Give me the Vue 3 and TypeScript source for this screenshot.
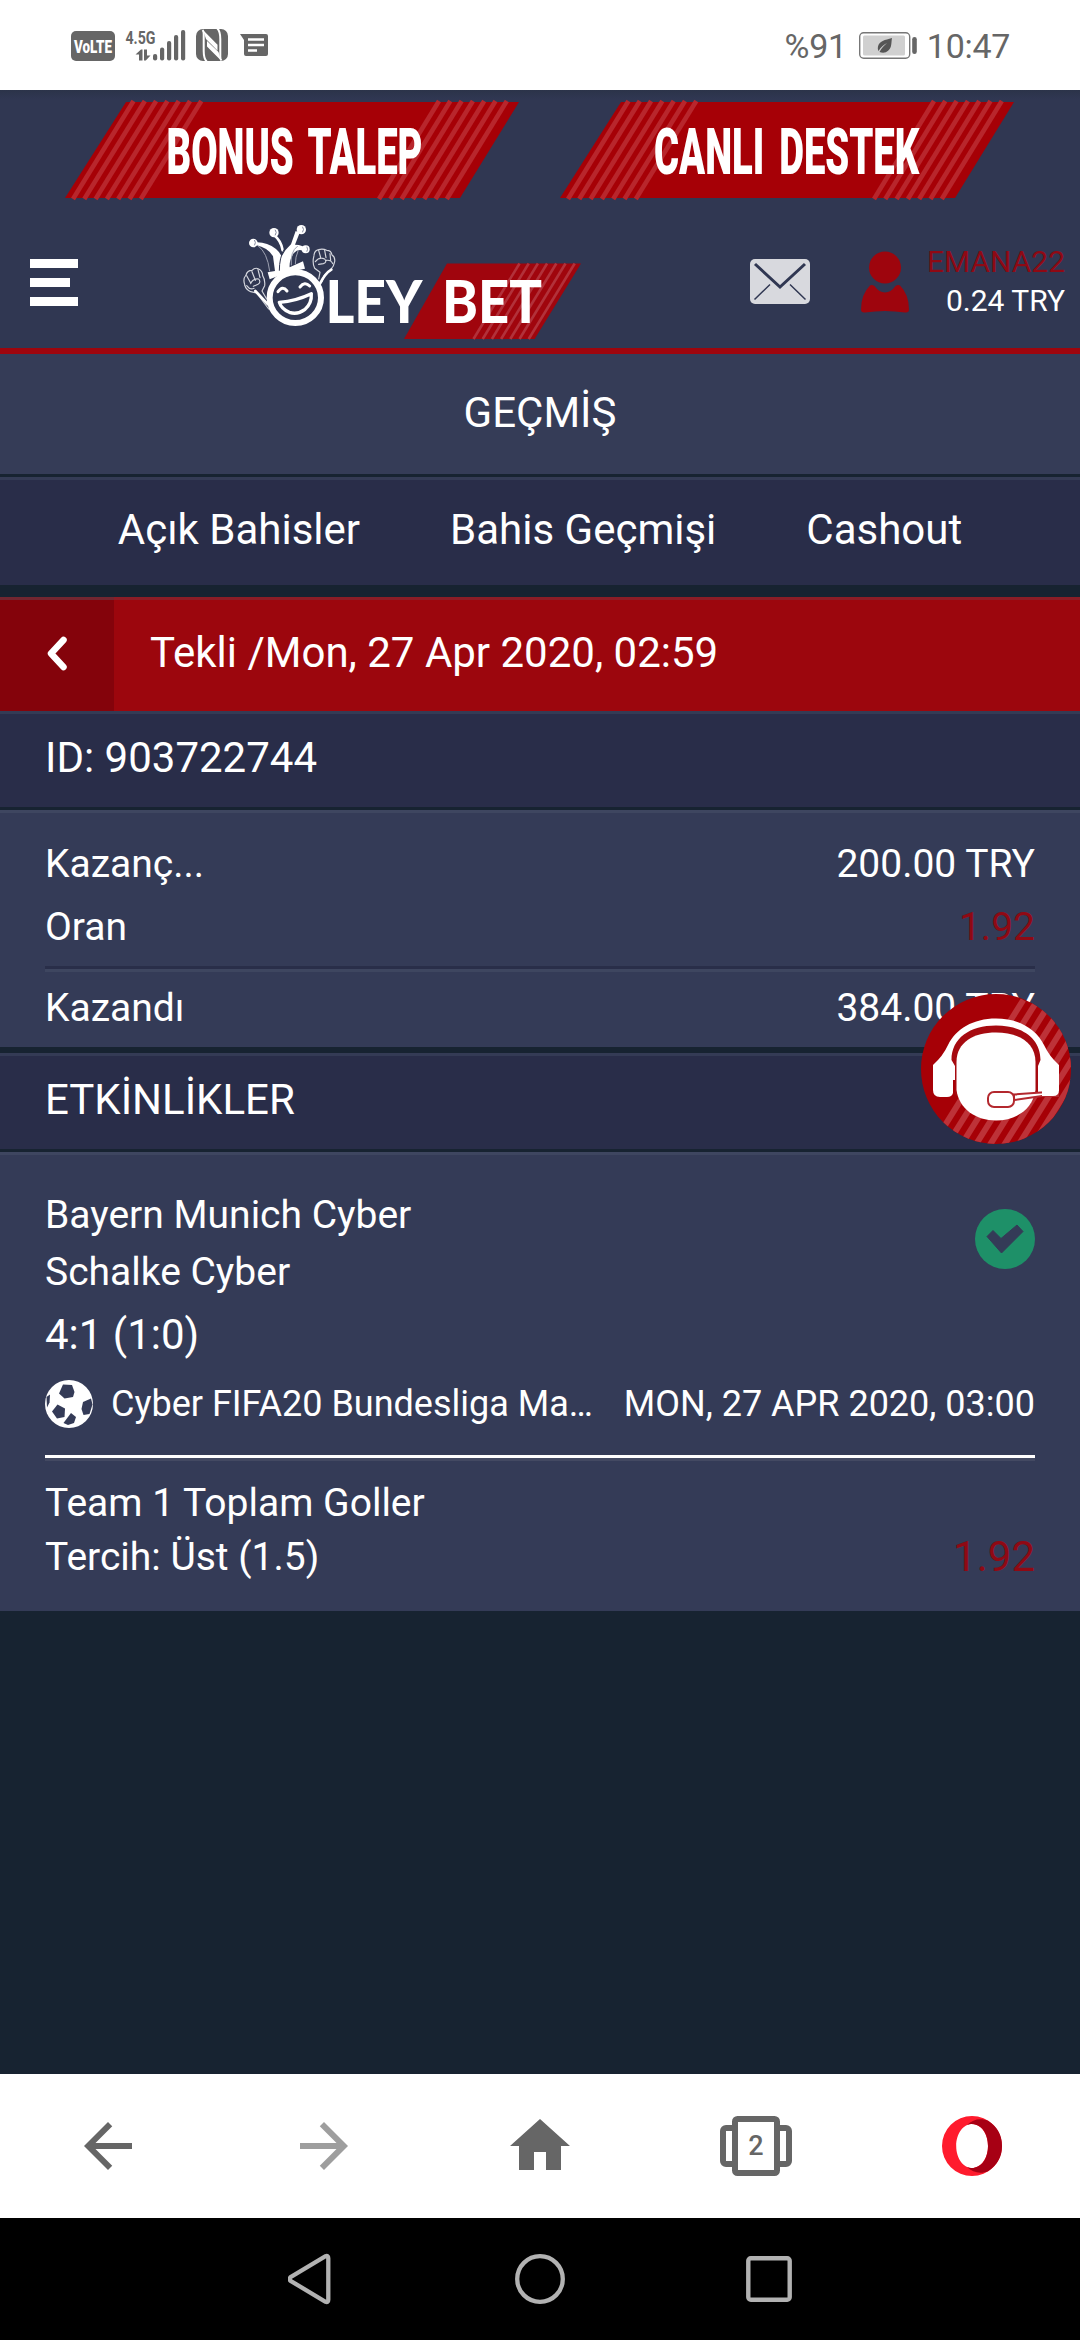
<script setup lang="ts">
interface Banner {
  label: string
  textX: number
  scale: number
}

interface SummaryRow {
  label: string
  value: string
  accent?: boolean
}

const banners: Banner[] = [
  { label: 'BONUS TALEP', textX: 101.5, scale: 0.593 },
  { label: 'CANLI DESTEK', textX: 94, scale: 0.593 },
]

const stripes = [0, 1, 2, 3, 4, 5, 6]
const tabs = ['Açık Bahisler', 'Bahis Geçmişi', 'Cashout']

const summary: SummaryRow[] = [
  { label: 'Kazanç...', value: '200.00 TRY' },
  { label: 'Oran', value: '1.92', accent: true },
]
</script>

<template>
  <div class="screen">
    <div class="status">
      <svg class="status-left" width="210" height="40" viewBox="66 25 210 40">
        <rect x="71" y="31" width="44" height="30" rx="5" fill="#666" />
        <text x="74" y="52.500" class="volte" textLength="38" lengthAdjust="spacingAndGlyphs">VoLTE</text>
        <text x="125.500" y="43.700" class="net" textLength="30" lengthAdjust="spacingAndGlyphs">4.5G</text>
        <g fill="#666">
          <path d="M135.500 54.500L141 49.500h1.500v11h-3.500v-6z" />
          <path d="M150.500 55.500L145.800 60.500h-1.800v-11h3v6z" />
          <rect x="153" y="54" width="4.200" height="6.500" rx="2" />
          <rect x="160" y="47.500" width="4.200" height="13" rx="2" />
          <rect x="167" y="41" width="4.200" height="19.500" rx="2" />
          <rect x="174" y="35" width="4.200" height="25.500" rx="2" />
          <rect x="181" y="30" width="4.200" height="30.500" rx="2" />
          <rect x="196" y="29" width="32" height="32" rx="7" />
          <path d="M240 34h26a2 2 0 0 1 2 2v18a2 2 0 0 1-2 2h-20a2 2 0 0 1-2-2V40z" />
        </g>
        <path d="M202.500 30c1.500 1.500 1.200 3 1.200 5v16c0 4 .3 8 3 10.500M221.500 60.500c-1.500-1.500-1.200-3-1.200-5V39c0-4-.3-8-3-10.500" fill="none" stroke="#fff" stroke-width="2" />
        <path d="M203 30l14.500 14.800v5.700L206 39zM221 60.500L207 46.500V41L218.500 52z" fill="#fff" />
        <path d="M248 39.500h16M248 45h16M248 50.500h9" stroke="#fff" stroke-width="2.600" />
      </svg>
      <div class="status-right">
        <span>%91</span>
        <svg width="60" height="30" viewBox="857 31 60 30">
          <rect x="858.700" y="32.700" width="50" height="25.600" rx="4" fill="#fff" stroke="#777" stroke-width="1.400" />
          <rect x="862" y="35.500" width="42" height="20" rx="1.500" fill="#d0d0d0" />
          <rect x="911.200" y="37" width="4.600" height="17" rx="2.300" fill="#666" />
          <path d="M891 38c-7 2-13 3-14 8.500-.5 2 0 3.500.5 4.500 2.500-4 5-6 8.500-8-3 2.500-5.500 5-7.500 9 6 2 10-1 11.500-6 .7-3 .5-6 1-8z" fill="#555" />
        </svg>
        <span>10:47</span>
      </div>
    </div>

    <header class="header">
      <div class="banners">
        <svg v-for="b in banners" :key="b.label" width="455" height="96" viewBox="0 0 455 96">
          <path d="M61 0H454L395 96H0z" fill="#a60006" />
          <g stroke="#b8262c" stroke-width="4.600">
            <line v-for="s in stripes" :key="'l' + s" :x1="68.500 + s * 11.300" y1="-1" :x2="8 + s * 11.300" y2="97" />
            <line v-for="s in stripes" :key="'r' + s" :x1="374 + s * 11.300" y1="-1" :x2="314 + s * 11.300" y2="97" />
          </g>
          <text class="banner-text" :transform="`translate(${b.textX} 72) scale(${b.scale} 1)`">{{ b.label }}</text>
        </svg>
      </div>

      <div class="brand-row">
        <svg class="burger" width="48" height="47" viewBox="0 0 48 47" fill="#fff">
          <rect width="48" height="9" />
          <rect y="19" width="40" height="9" />
          <rect y="38" width="48" height="9" />
        </svg>

        <svg class="logo" width="345" height="120" viewBox="240 222 345 120">
          <path d="M447 263.500H581L534.600 339H404z" fill="#a0050d" />
          <g stroke="#b2313a" stroke-width="2.600">
            <line v-for="s in stripes" :key="s" :x1="519.500 + s * 9.200" y1="263.500" :x2="473.500 + s * 9.200" y2="339" />
          </g>
          <text x="325.500" y="322.500" class="logo-text" textLength="97" lengthAdjust="spacingAndGlyphs">LEY</text>
          <text x="442" y="322.500" class="logo-text" textLength="100" lengthAdjust="spacingAndGlyphs">BET</text>
          <g transform="translate(230 215) scale(.33333)" fill="none" stroke="#fff" stroke-linecap="round" stroke-linejoin="round">
            <ellipse cx="196" cy="248" rx="77" ry="76" stroke-width="18" />
            <path d="M113 172l22-4-6-44q-14-26-52-34l-1-8q34-2 62 20 10 8 17 22 10-20 28-36l14-40 12 5-14 36q24 0 36 14l-6 8q-18-14-34 4-14 22-12 42l40-18 6 22q-50 8-106 32z" fill="#fff" stroke="none" />
            <path d="M84 92q28 20 35 76M138 64q16 18 18 36M184 150q-4-40 18-56M196 146q0-20 8-38" stroke="#9da1b1" stroke-width="3" />
            <path d="M132 60q22 18 26 46" stroke-width="8" />
            <path d="M148 166q0-38 14-62" stroke="#30364f" stroke-width="3" />
            <g fill="#fff" stroke="none">
              <circle cx="70" cy="84" r="13" />
              <circle cx="132" cy="53" r="14" />
              <circle cx="214" cy="44" r="14" />
              <circle cx="227" cy="103" r="12" />
            </g>
            <g stroke="#858a9e" stroke-width="3">
              <path d="M74 76q5 7 0 14M136 45q6 7 0 15M218 36q6 7 0 15M231 96q4 7 0 13" />
            </g>
            <path d="M148 262q50-4 96-26 2 30-20 48-22 16-46 8-24-10-30-30z" stroke-width="10" />
            <path d="M144 230q14-20 27-2M210 216q14-18 29-3" stroke-width="9" />
            <g stroke-width="3.500" stroke="#d5d7de">
              <path d="M252 122q-6 22 2 38l16 12-4 20M252 120q2-14 14-16 12-4 24 2 14 0 16 14 10 6 8 20-2 14-12 24l-20 18-6 18" />
              <path d="M266 106l6 22M284 106l4 22M300 116l2 20M256 140q12-16 28-8 8 10-4 14l-14 2M288 136q16-2 20 10" />
              <path d="M44 208q-6-16 4-28 4-14 18-14 10-10 20-4 12 6 12 20 8 12 6 30l-8 16 14 24M44 210q4 14 18 20l18 4 36 48" />
              <path d="M50 182l12 22M66 170l10 26M84 164l6 24M62 206q6-16 24-14 8 10-2 16l-14 6M50 212q10 14 22 8" />
            </g>
            <path d="M76 228l38 40M304 164q-18 10-34 42" stroke-width="8" />
          </g>
        </svg>

        <div class="account">
          <svg width="60" height="45" viewBox="0 0 60 45">
            <rect width="60" height="45" rx="5" fill="#d8d9de" />
            <path d="M5 5l25 23L55 5" fill="none" stroke="#303752" stroke-width="3" />
            <path d="M4.500 40.500L20 25.500M55.500 40.500L40 25.500" fill="none" stroke="#303752" stroke-width="1.500" />
          </svg>
          <svg class="person" width="48" height="62" viewBox="0 0 48 62" fill="#9e050d">
            <circle cx="24" cy="16.500" r="16" />
            <path d="M9 34.500q2-1 4.500.5 4.500 6.500 10.500 6.500t10.500-6.500q2.500-1.500 4.500-.5 9 9 9 24 0 3.500-4 3-10-1.500-20-1.500t-20 1.500q-4 .5-4-3 0-15 9-24z" />
          </svg>
          <div class="user">
            <span class="name">EMANA22</span>
            <span>0.24 TRY</span>
          </div>
        </div>
      </div>
    </header>

    <main class="content">
      <h1 class="title">GEÇMİŞ</h1>
      <nav class="tabs">
        <span v-for="t in tabs" :key="t">{{ t }}</span>
      </nav>

      <div class="bet-head">
        <div class="back">
          <svg width="24" height="38" viewBox="0 0 24 38">
            <path d="M18.500 5L6 18.500 18.500 32" fill="none" stroke="#fff" stroke-width="6.500" stroke-linecap="round" stroke-linejoin="round" />
          </svg>
        </div>
        <div class="bet-title">Tekli /Mon, 27 Apr 2020, 02:59</div>
      </div>
      <div class="section-head first">ID: 903722744</div>

      <section class="panel summary">
        <div v-for="r in summary" :key="r.label" class="row">
          <span>{{ r.label }}</span>
          <span :class="{ accent: r.accent }">{{ r.value }}</span>
        </div>
        <div class="row total">
          <span>Kazandı</span>
          <span>384.00 TRY</span>
        </div>
      </section>

      <div class="section-head events">ETKİNLİKLER</div>

      <section class="panel event">
        <div class="teams">
          <div>
            <div class="team">Bayern Munich Cyber</div>
            <div class="team">Schalke Cyber</div>
          </div>
          <svg class="won" width="60" height="60" viewBox="0 0 60 60">
            <circle cx="30" cy="30" r="30" fill="#1e9068" />
            <path d="M12 27.500l6-6 8 8L42 16l6 6.500L26.500 44z" fill="#343b57" stroke="#343b57" stroke-width="1" stroke-linejoin="round" />
          </svg>
        </div>
        <div class="score">4:1 (1:0)</div>
        <div class="league">
          <svg width="48" height="48" viewBox="0 0 48 48">
            <circle cx="24" cy="24" r="24" fill="#fff" />
            <g fill="#343b57">
              <path d="M18 4.500l9 .5 2.500 7-1.500 5-8.500 1.500-5.500-5z" />
              <path d="M38 22l8-3.500 1.500 6-3 9.500-6 1-2-6z" />
              <path d="M12.500 24.500l7.500 4-.5 8.500-7.500 1.500-5-7z" />
              <path d="M26 33l5 4-2 6-6 2-4.500-2z" />
              <path d="M1.500 17l3.500-2.500-.5 8-2.500 5z" />
            </g>
          </svg>
          <span class="league-name">Cyber FIFA20 Bundesliga Ma…</span>
          <span class="date">MON, 27 APR 2020, 03:00</span>
        </div>
        <div class="pick">
          <div>
            <div class="market">Team 1 Toplam Goller</div>
            <div class="market">Tercih: Üst (1.5)</div>
          </div>
          <span class="accent odds">1.92</span>
        </div>
      </section>

      <svg class="support" width="152" height="152" viewBox="920 993 152 152">
        <defs>
          <clipPath id="supportDisc"><circle cx="996" cy="1069" r="75" /></clipPath>
        </defs>
        <circle cx="996" cy="1069" r="75" fill="#a60006" />
        <g clip-path="url(#supportDisc)" stroke="#bd3238" stroke-width="6">
          <line v-for="s in 10" :key="s" :x1="1009 + s * 14.300" y1="1000" :x2="914 + s * 14.300" y2="1152" />
        </g>
        <path d="M933 1065Q943 1056 948 1045C956 1029 973 1018.500 996 1018.500S1036 1029 1044 1045Q1049 1056 1059 1065V1096H1038V1080H953V1093Q952 1097 947 1097H940Q933 1097 933 1090z" fill="#fff" />
        <path d="M951.500 1060C951.500 1038 970 1025.500 996 1025.500S1040.500 1038 1040.500 1060L1038 1066V1094L1026 1108H968L955 1094V1066z" fill="#a60a10" />
        <path d="M956.500 1062C956.500 1042 974 1032.500 996 1032.500S1035.500 1042 1035.500 1062V1090C1033 1109 1016 1120.500 996 1120.500S959 1109 956.500 1090z" fill="#fff" />
        <g fill="#fff" stroke="#b3282e" stroke-width="2">
          <path d="M1014 1094.500l27-2 17-1v4.500h-16l-28 4z" stroke="#b3282e" />
          <rect x="988" y="1092" width="26" height="15" rx="6" />
        </g>
        <path d="M1042 1085h17v5q0 6-6 6h-11z" fill="#fff" />
      </svg>
    </main>

    <div class="browser-bar">
      <div class="slot">
        <svg width="72" height="72" viewBox="0 0 24 24" fill="#666"><path d="M20 11H7.830l5.590-5.590L12 4l-8 8 8 8 1.410-1.410L7.830 13H20z" /></svg>
      </div>
      <div class="slot">
        <svg width="72" height="72" viewBox="0 0 24 24" fill="#9e9e9e"><path d="M12 4l-1.410 1.410L16.170 11H4v2h12.170l-5.580 5.590L12 20l8-8z" /></svg>
      </div>
      <div class="slot">
        <svg width="72" height="72" viewBox="0 0 24 24" fill="#666"><path d="M10 20v-6h4v6h5v-8h3L12 3 2 12h3v8z" /></svg>
      </div>
      <div class="slot">
        <svg width="72" height="60" viewBox="0 0 72 60" fill="none" stroke="#666" stroke-width="6">
          <rect x="3" y="12" width="20" height="36" rx="3" />
          <rect x="49" y="12" width="20" height="36" rx="3" />
          <rect x="15" y="3" width="42" height="54" rx="2.500" fill="#fff" />
          <text x="36" y="39" text-anchor="middle" class="tab-count">2</text>
        </svg>
      </div>
      <div class="slot">
        <svg width="60" height="60" viewBox="0 0 60 60" fill-rule="evenodd">
          <path d="M30 0a30 30 0 1 1 0 60 30 30 0 0 1 0-60zM30 8c-9 0-15.800 10-15.800 22S21 52 30 52s16-10 16-22S39 8 30 8z" fill="#ff1b2d" />
          <path d="M25 9C31 3 39 2 46 4.800q14 9 14 25.200T46 55.200C39 58 31 57 25 51q4 1.800 8 .5C41 50 46 41 46 30S41 10 33 8.500Q29 7.200 25 9z" fill="#a70014" />
        </svg>
      </div>
    </div>

    <div class="system-bar">
      <svg width="46" height="52" viewBox="0 0 46 52"><path d="M2.500 24.200q-1.500 1.800 0 3.600L37.500 48.800q2.800 1 2.800-2V5.200q0-3-2.800-2z" fill="none" stroke="#b2b2b2" stroke-width="4.300" /></svg>
      <svg width="52" height="52" viewBox="0 0 52 52"><circle cx="26" cy="26" r="22.800" fill="none" stroke="#b2b2b2" stroke-width="4.300" /></svg>
      <svg width="46" height="52" viewBox="0 0 46 52"><rect x="2.300" y="5.300" width="41.400" height="41.400" rx="2.500" fill="none" stroke="#b2b2b2" stroke-width="4.400" /></svg>
    </div>
  </div>
</template>

<style>
body {
  margin: 0;
  background: #172331;
}
</style>

<style scoped>
.screen {
  width: 1080px;
  height: 2340px;
  display: flex;
  flex-direction: column;
  overflow: hidden;
  font-family: Roboto, "Liberation Sans", sans-serif;
  color: #fff;
  background: #172331;
}
.screen * {
  box-sizing: border-box;
}
svg {
  display: block;
  flex: none;
}
.status {
  height: 90px;
  flex: none;
  display: flex;
  justify-content: space-between;
  align-items: center;
  padding: 0 70px 0 66px;
  background: #fff;
  color: #666;
}
.volte {
  font: 900 19px Roboto, sans-serif;
  fill: #fff;
}
.net {
  font: 700 19px Roboto, sans-serif;
  fill: #666;
}
.status-right {
  display: flex;
  align-items: center;
  gap: 9px;
  font-size: 34px;
  letter-spacing: -0.3px;
  line-height: 40px;
  padding-top: 2px;
}
.status-right svg {
  margin-left: 2px;
}
.header {
  height: 264px;
  flex: none;
  padding-top: 12px;
  border-bottom: 6px solid #9e050d;
  background: linear-gradient(#2b3349, #303752 9px);
}
.banners {
  display: flex;
  gap: 40px;
  padding-left: 65px;
}
.banners svg {
  overflow: visible;
}
.banner-text {
  font: 900 64.500px Roboto, sans-serif;
  word-spacing: 9px;
  fill: #fff;
}
.brand-row {
  display: flex;
  align-items: flex-start;
  padding: 24px 15px 0 30px;
}
.burger {
  margin-top: 37px;
}
.logo {
  margin-left: 162px;
}
.logo-text {
  font: 900 58.500px Lato, sans-serif;
  fill: #fff;
}
.account {
  flex: 1;
  display: flex;
  padding-left: 165px;
  padding-top: 29px;
}
.account > svg:first-child {
  margin-top: 8px;
}
.person {
  margin-left: 51px;
}
.user {
  flex: 1;
  display: flex;
  flex-direction: column;
  align-items: flex-end;
  font-size: 30px;
  line-height: 39px;
  margin-top: -9px;
}
.name,
.accent {
  color: #8f0914;
}
.content {
  position: relative;
  flex: 1;
}
.title {
  height: 120px;
  margin: 0;
  padding-bottom: 3px;
  display: flex;
  align-items: center;
  justify-content: center;
  font-size: 42px;
  font-weight: 400;
  background: #353c57;
}
.tabs {
  height: 108px;
  margin-top: 3px;
  padding-bottom: 6px;
  display: flex;
  align-items: center;
  justify-content: center;
  gap: 90px;
  border-top: 3px solid #343b55;
  font-size: 42px;
  background: #292d49;
}
.bet-head {
  height: 114px;
  margin-top: 12px;
  display: flex;
  font-size: 42px;
  background: #9c060d;
  box-shadow: inset 0 3px #8b1d26;
}
.back {
  width: 114px;
  padding-left: 45px;
  padding-top: 38px;
  background: #84030b;
  box-shadow: inset 0 3px #722630;
}
.bet-title {
  display: flex;
  align-items: center;
  padding-left: 36px;
  padding-bottom: 3px;
}
.section-head {
  height: 96px;
  display: flex;
  align-items: center;
  padding: 0 45px 6px;
  border-top: 3px solid #343b55;
  font-size: 42px;
  background: #292d49;
}
.events {
  margin-top: 6px;
}
.panel {
  margin-top: 3px;
  padding: 0 45px;
  border-top: 3px solid #3e4660;
  font-size: 39px;
  background: #343b57;
}
.summary {
  height: 237px;
  padding-top: 19px;
}
.row {
  height: 63px;
  display: flex;
  justify-content: space-between;
  align-items: center;
}
.total {
  height: 81px;
  margin-top: 8px;
  padding-bottom: 1px;
  border-top: 3px solid #292e49;
  box-shadow: inset 0 3px #3e4660;
}
.event {
  height: 459px;
  padding-top: 32px;
}
.teams {
  display: flex;
  justify-content: space-between;
}
.team {
  height: 57px;
  line-height: 57px;
}
.won {
  margin-top: 22px;
}
.score {
  height: 67px;
  line-height: 67px;
  font-size: 42px;
}
.league {
  height: 71px;
  display: flex;
  align-items: center;
  font-size: 36px;
}
.league-name {
  margin-left: 18px;
  white-space: nowrap;
}
.date {
  margin-left: auto;
  white-space: nowrap;
}
.pick {
  margin-top: 16px;
  padding-top: 18px;
  display: flex;
  justify-content: space-between;
  border-top: 3px solid #fff;
  box-shadow: inset 0 3px #434962;
}
.market {
  height: 54px;
  line-height: 54px;
}
.odds {
  align-self: flex-end;
  font-size: 42px;
  line-height: 54px;
}
.support {
  position: absolute;
  right: 8px;
  top: 639px;
}
.browser-bar {
  height: 144px;
  flex: none;
  display: flex;
  background: #fff;
}
.slot {
  flex: 1;
  display: flex;
  align-items: center;
  justify-content: center;
}
.tab-count {
  font: 500 27px Roboto, sans-serif;
  fill: #666;
  stroke: none;
}
.system-bar {
  height: 122px;
  flex: none;
  display: flex;
  align-items: center;
  justify-content: center;
  gap: 180px;
  background: #000;
}
</style>
